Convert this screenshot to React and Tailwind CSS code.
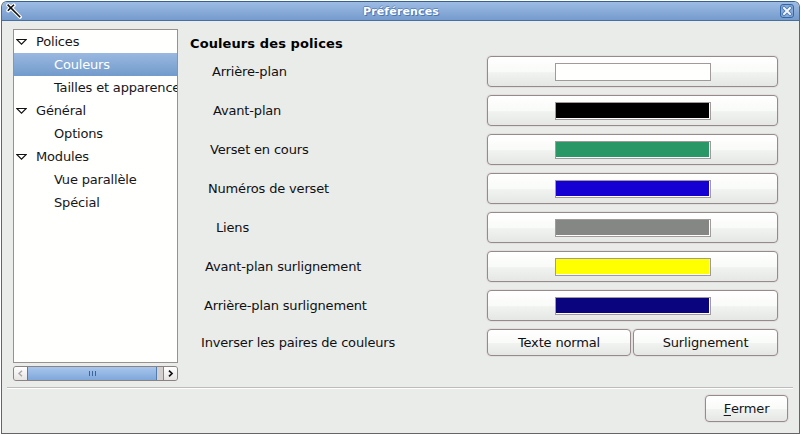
import React from "react";

const tree = [
  { label: "Polices", parent: true },
  { label: "Couleurs", selected: true },
  { label: "Tailles et apparence" },
  { label: "Général", parent: true },
  { label: "Options" },
  { label: "Modules", parent: true },
  { label: "Vue parallèle" },
  { label: "Spécial" },
];

const colors = [
  { label: "Arrière-plan", pad: "pl-[22px]", fill: "bg-[#fffffe]" },
  { label: "Avant-plan", pad: "pl-[23px]", fill: "bg-black" },
  { label: "Verset en cours", pad: "pl-[20px]", fill: "bg-[#2a9767]" },
  { label: "Numéros de verset", pad: "pl-[18px]", fill: "bg-[#1400d2]" },
  { label: "Liens", pad: "pl-[26px]", fill: "bg-[#858784]" },
  { label: "Avant-plan surlignement", pad: "pl-[15px]", fill: "bg-[#ffff00]" },
  { label: "Arrière-plan surlignement", pad: "pl-[14px]", fill: "bg-[#0a047f]" },
];

function Button({ className, children }) {
  return (
    <button
      className={
        "flex items-center justify-center rounded-[4px] border border-[#968a8b] bg-linear-[to_bottom,#ffffff_0%,#f9fbf8_50%,#f1f3f0_54%,#e5e7e4_100%] tracking-[-0.15px] shadow-[0_0_0_1px_#e2dfdf] " +
        className
      }
    >
      {children}
    </button>
  );
}

function WandIcon() {
  return (
    <svg className="ml-[4px] size-[16px]" viewBox="0 0 16 16" fill="none">
      <path
        d="M2.2 2.2 14 14M2.2 7.5 7.8 2.2"
        stroke="#fff"
        strokeWidth="3.8"
        strokeLinecap="round"
      />
      <path d="M1.6 1.6 14.2 14.2" stroke="#111" strokeWidth="1.6" />
      <path d="M1.8 7.8 8 1.8" stroke="#111" strokeWidth="1.6" />
    </svg>
  );
}

function CloseIcon() {
  return (
    <svg className="mr-[5px] size-[14px]" viewBox="0 0 14 14" fill="none">
      <rect x=".5" y=".5" width="13" height="13" rx="2.5" fill="#87abd9" stroke="#3465a4" />
      <path d="m4 4 6 6m0-6-6 6" stroke="#4b78b3" strokeWidth="3.8" strokeLinecap="square" />
      <path d="m4 4 6 6m0-6-6 6" stroke="#f4f7fb" strokeWidth="2" strokeLinecap="square" />
    </svg>
  );
}

export default function App() {
  return (
    <div className="h-[435px] w-[801px] overflow-hidden bg-white p-px font-['DejaVu_Sans',sans-serif] text-[13px] leading-none text-[#16161a]">
      <div className="flex h-[433px] w-[799px] flex-col overflow-hidden rounded-t-[6px] border border-[#666565] border-t-[#36618f] bg-[#eaece9]">
        <header className="flex h-[19px] shrink-0 items-center justify-between border-b border-[#47709f] bg-linear-to-b from-[#9dbce4] to-[#759bcd]">
          <WandIcon />
          <span className="text-[11px] font-bold tracking-[0.15px] text-white [text-shadow:1px_1px_0_#4b78b3,-1px_0_0_#5e88bf,0_-1px_0_#5e88bf]">
            Préférences
          </span>
          <CloseIcon />
        </header>

        <main className="flex h-[366px] shrink-0">
          <aside className="ml-[11px] mt-[8px] w-[165px]">
            <ul className="h-[334px] overflow-hidden border border-[#979190] bg-[#fffffe] tracking-[-0.17px]">
              {tree.map((n) => (
                <li
                  key={n.label}
                  className={
                    "flex h-[23px] items-center whitespace-nowrap " +
                    (n.selected ? "bg-linear-to-b from-[#9ab8e0] to-[#729bcb] text-white" : "")
                  }
                >
                  {n.parent ? (
                    <svg className="ml-[2px] mr-[9px] h-[8px] w-[11px] shrink-0" viewBox="0 0 11 8">
                      <path d="M.8 1.5h9.4L5.5 6.2Z" fill="#fff" stroke="#111" strokeWidth="1.1" />
                    </svg>
                  ) : (
                    <span className="w-[40px] shrink-0" />
                  )}
                  <span>{n.label}</span>
                </li>
              ))}
            </ul>
            <div className="mt-[3px] flex h-[15px] overflow-hidden rounded-[3px] border border-[#8b8282] bg-[#d3cfcf]">
              <span className="flex w-[13px] items-center justify-center bg-linear-to-b from-white to-[#e6e4e3]">
                <svg className="size-[7px]" viewBox="0 0 7 7">
                  <path d="M5 .7 2 3.5 5 6.3" fill="none" stroke="#aaa6a4" strokeWidth="1.4" />
                </svg>
              </span>
              <span className="-my-px flex w-[130px] items-center justify-center gap-[2px] border border-[#517dae] bg-linear-to-b from-[#a8c6ec] to-[#7fa7da]">
                <i className="h-[5px] w-px bg-[#3c659c]" />
                <i className="h-[5px] w-px bg-[#3c659c]" />
                <i className="h-[5px] w-px bg-[#3c659c]" />
              </span>
              <span className="ml-auto flex w-[14px] items-center justify-center border-l border-[#8b8282] bg-linear-to-b from-white to-[#e6e4e3]">
                <svg className="size-[7px]" viewBox="0 0 7 7">
                  <path d="M2 .7 5 3.5 2 6.3" fill="none" stroke="#111" strokeWidth="1.7" />
                </svg>
              </span>
            </div>
          </aside>

          <section className="ml-[12px] w-[588px] pt-[16px] tracking-[-0.17px] text-[#101014]">
            <h1 className="mb-[6px] h-[13px] font-bold tracking-[0.1px] text-black">
              Couleurs des polices
            </h1>
            {colors.map((c) => (
              <div key={c.label} className="mb-[8px] flex h-[31px] items-center">
                <span className={"w-[297px] " + c.pad}>{c.label}</span>
                <Button className="h-[31px] w-[291px]">
                  <span className="flex h-[18px] w-[156px] border border-[#a09a9a] bg-white pb-px pr-px">
                    <span className={"flex-1 " + c.fill} />
                  </span>
                </Button>
              </div>
            ))}
            <div className="flex h-[27px] items-center">
              <span className="w-[297px] pl-[11px]">Inverser les paires de couleurs</span>
              <Button className="mr-[2px] h-[27px] w-[144px]">Texte normal</Button>
              <Button className="h-[27px] w-[145px]">Surlignement</Button>
            </div>
          </section>
        </main>

        <footer className="ml-[5px] mr-[6px] border-t border-[#bdbbbb]">
          <div className="flex justify-end border-t border-white pt-[6px]">
            <Button className="mr-[5px] h-[27px] w-[83px]">
              <span className="underline decoration-1 underline-offset-2">F</span>ermer
            </Button>
          </div>
        </footer>
      </div>
    </div>
  );
}
